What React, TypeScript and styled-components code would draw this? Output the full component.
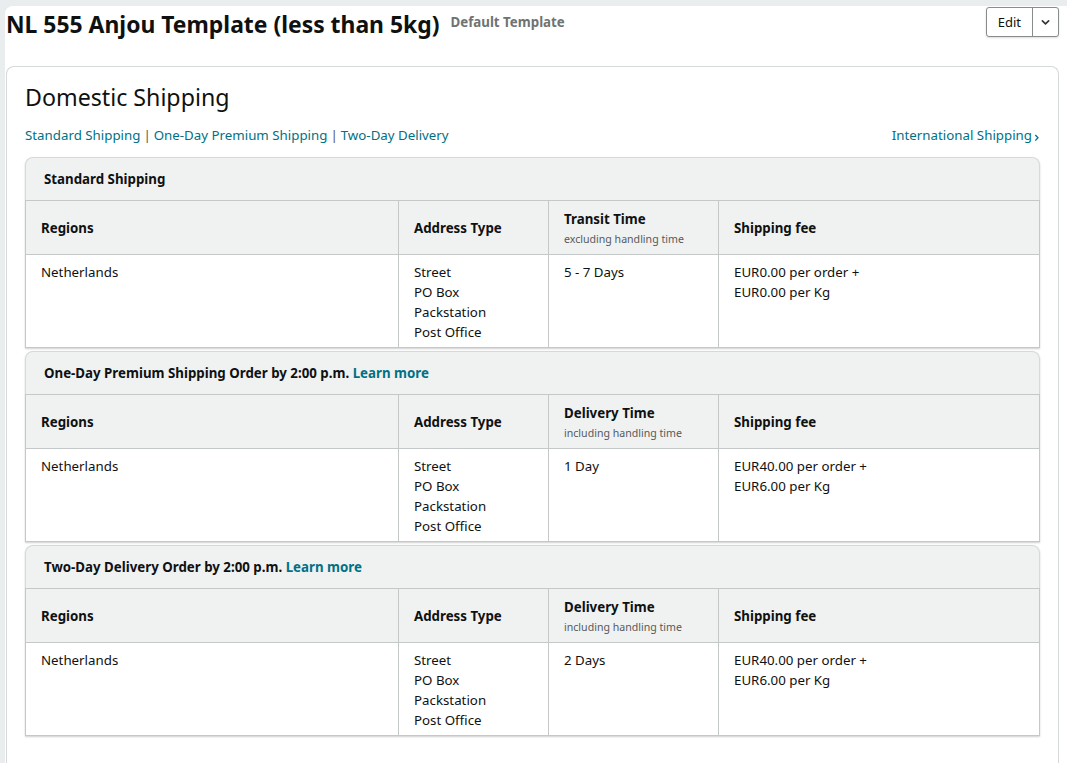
import React from 'react';
import styled, {createGlobalStyle} from 'styled-components';

const GlobalStyle = createGlobalStyle`
  html, body {
    margin: 0;
    padding: 0;
    background: #eaeded;
    font-family: "Noto Sans", "Liberation Sans", Arial, sans-serif;
    color: #0f1111;
  }
  * {
    box-sizing: border-box;
  }
`

const addressTypes = ['Street', 'PO Box', 'Packstation', 'Post Office']

const sections = [
  {
    title: 'Standard Shipping',
    learnMore: false,
    timeLabel: 'Transit Time',
    timeNote: 'excluding handling time',
    time: '5 - 7 Days',
    perOrder: 'EUR0.00',
    perKg: 'EUR0.00'
  },
  {
    title: 'One-Day Premium Shipping Order by 2:00 p.m.',
    learnMore: true,
    timeLabel: 'Delivery Time',
    timeNote: 'including handling time',
    time: '1 Day',
    perOrder: 'EUR40.00',
    perKg: 'EUR6.00'
  },
  {
    title: 'Two-Day Delivery Order by 2:00 p.m.',
    learnMore: true,
    timeLabel: 'Delivery Time',
    timeNote: 'including handling time',
    time: '2 Days',
    perOrder: 'EUR40.00',
    perKg: 'EUR6.00'
  }
]

const Chevron = ({size = 9}: { size?: number }) => (
  <svg width={size} height={size} viewBox="0 0 10 10">
    <path d="M1.5 3.2 L5 6.6 L8.5 3.2" fill="none" stroke="#333" strokeWidth="1.8" strokeLinecap="round"/>
  </svg>
)

const RightArrow = () => (
  <svg width="6" height="9" viewBox="0 0 6 9">
    <path d="M1.3 2 L4 4.8 L1.3 7.6" fill="none" stroke="#007185" strokeWidth="1.3"/>
  </svg>
)

const ShippingSection = ({section}: { section: typeof sections[0] }) => (
  <Section>
    <SectionHead>
      {section.title}
      {section.learnMore && <> <LearnMore>Learn more</LearnMore></>}
    </SectionHead>
    <Table>
      <colgroup>
        <col style={{width: 373}}/>
        <col style={{width: 150}}/>
        <col style={{width: 170}}/>
        <col/>
      </colgroup>
      <thead>
      <tr>
        <Th>Regions</Th>
        <Th>Address Type</Th>
        <Th>
          {section.timeLabel}
          <Note>{section.timeNote}</Note>
        </Th>
        <Th>Shipping fee</Th>
      </tr>
      </thead>
      <tbody>
      <tr>
        <Td>Netherlands</Td>
        <Td>
          {addressTypes.map(type => <div key={type}>{type}</div>)}
        </Td>
        <Td>{section.time}</Td>
        <Td>
          <div>{section.perOrder} per order +</div>
          <div>{section.perKg} per Kg</div>
        </Td>
      </tr>
      </tbody>
    </Table>
  </Section>
)

export default function App() {
  return (
    <>
      <GlobalStyle/>
      <Page>
        <Header>
          <TitleRow>
            <Title>NL 555 Anjou Template (less than 5kg)</Title>
            <Badge>Default Template</Badge>
          </TitleRow>
          <SplitButton>
            <EditPart>Edit</EditPart>
            <DropPart><Chevron/></DropPart>
          </SplitButton>
        </Header>
        <Card>
          <Heading>Domestic Shipping</Heading>
          <LinkRow>
            <Links>
              <Link>Standard Shipping</Link>
              <Sep>|</Sep>
              <Link>One-Day Premium Shipping</Link>
              <Sep>|</Sep>
              <Link>Two-Day Delivery</Link>
            </Links>
            <Link>International Shipping <RightArrow/></Link>
          </LinkRow>
          <Sections>
            {sections.map(section => <ShippingSection key={section.title} section={section}/>)}
          </Sections>
        </Card>
      </Page>
    </>
  )
}

const Page = styled.div`
  margin: 6px 0 0 5px;
  padding: 0 8px 0 1px;
  background: #fff;
  border-top-left-radius: 8px;
  min-height: calc(100vh - 6px);
`

const Header = styled.header`
  display: flex;
  justify-content: space-between;
  align-items: flex-start;
  height: 60px;
  padding-top: 1px;
`

const TitleRow = styled.div`
  display: flex;
  align-items: baseline;
  gap: 11px;
  padding-top: 3px;
`

const Title = styled.h1`
  margin: 0;
  font-size: 22.9px;
  line-height: 30px;
  font-weight: 700;
  color: #0f1111;
`

const Badge = styled.span`
  position: relative;
  top: -6px;
  font-size: 13.3px;
  font-weight: 700;
  color: #6f7373;
`

const SplitButton = styled.div`
  display: flex;
  height: 30px;
  border: 1px solid #888c8c;
  border-radius: 3px;
  background: #fff;
  box-shadow: 0 1px 2px rgba(15, 17, 17, .15);
  font-size: 13px;
  color: #0f1111;
`

const EditPart = styled.div`
  display: flex;
  align-items: center;
  padding: 0 11px;
  border-right: 1px solid #888c8c;
`

const DropPart = styled.div`
  display: flex;
  align-items: center;
  justify-content: center;
  width: 25px;
`

const Card = styled.section`
  border: 1px solid #d5d9d9;
  border-bottom: none;
  border-radius: 8px 8px 0 0;
  padding: 14px 18px 40px 18px;
  min-height: 720px;
`

const Heading = styled.h2`
  margin: 0;
  font-size: 23.2px;
  line-height: 32px;
  font-weight: 400;
  color: #0f1111;
`

const LinkRow = styled.div`
  display: flex;
  justify-content: space-between;
  align-items: center;
  margin-top: 12px;
  line-height: 20px;
  font-size: 13.3px;
`

const Links = styled.div`
  display: flex;
  gap: 3px;
`

const Link = styled.span`
  color: #007185;
  cursor: pointer;
  display: inline-flex;
  align-items: center;
  gap: 2px;

  svg {
    margin-top: 4px;
  }
`

const Sep = styled.span`
  color: #565959;
`

const Sections = styled.div`
  display: flex;
  flex-direction: column;
  gap: 3px;
  margin-top: 12px;
`

const Section = styled.div`
  border-radius: 8px 8px 0 0;
  box-shadow: 0 1px 2px rgba(15, 17, 17, .2);
`

const SectionHead = styled.div`
  height: 43px;
  display: flex;
  align-items: center;
  padding: 0 18px;
  background: #f0f2f2;
  border: 1px solid #d5d9d9;
  border-bottom: none;
  border-radius: 8px 8px 0 0;
  font-size: 13.3px;
  font-weight: 700;
  white-space: pre;
`

const LearnMore = styled.span`
  color: #007185;
  cursor: pointer;
`

const Table = styled.table`
  width: 100%;
  border-collapse: collapse;
  table-layout: fixed;
  font-size: 13.3px;
  line-height: 20px;
`

const Th = styled.th`
  height: 54px;
  padding: 0 15px;
  background: #f0f2f2;
  border: 1px solid #c4c8c8;
  text-align: left;
  vertical-align: middle;
  font-weight: 700;
  color: #0f1111;
`

const Note = styled.div`
  font-size: 10.6px;
  line-height: 16px;
  font-weight: 400;
  color: #565959;
  margin-top: 2px;
`

const Td = styled.td`
  height: 93px;
  padding: 7px 15px 5px 15px;
  border: 1px solid #c4c8c8;
  vertical-align: top;
  color: #0f1111;
`
